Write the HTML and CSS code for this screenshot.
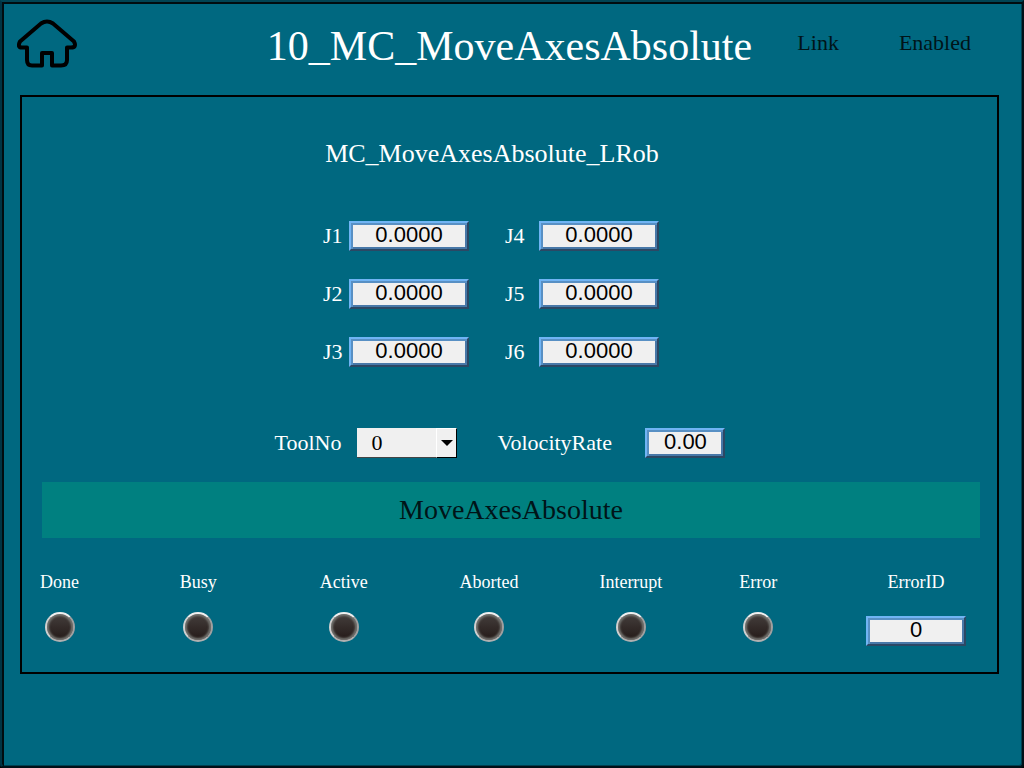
FILE: index.html
```html
<!DOCTYPE html>
<html lang="en">
<head>
<meta charset="utf-8">
<meta name="viewport" content="width=device-width, initial-scale=1">
<title>10_MC_MoveAxesAbsolute</title>
<link rel="stylesheet" href="styles.css">
</head>
<body>
<div class="screen">
  <header class="header">
    <button class="home" type="button" aria-label="Home">
      <svg viewBox="0 0 60 50" width="60" height="50" fill="none" stroke="#000" stroke-width="4" stroke-linejoin="round">
        <path d="M24 4.500Q30 .500 36 4.500L57 22.500Q60 28.500 54 28.500H50V41Q50 46.500 44 46.500H35V34H25V46.500H15Q10 46.500 10 41V28.500H5Q0 28.500 3 22.500Z"/>
      </svg>
    </button>
    <h1 class="title">10_MC_MoveAxesAbsolute</h1>
    <div class="states"><span>Link</span><span>Enabled</span></div>
  </header>
  <main class="panel">
    <h2 class="subtitle">MC_MoveAxesAbsolute_LRob</h2>
    <div class="axes">
      <label for="j1">J1</label><input class="field" id="j1" type="text" value="0.0000">
      <label class="second" for="j4">J4</label><input class="field" id="j4" type="text" value="0.0000">
      <label for="j2">J2</label><input class="field" id="j2" type="text" value="0.0000">
      <label class="second" for="j5">J5</label><input class="field" id="j5" type="text" value="0.0000">
      <label for="j3">J3</label><input class="field" id="j3" type="text" value="0.0000">
      <label class="second" for="j6">J6</label><input class="field" id="j6" type="text" value="0.0000">
    </div>
    <div class="options">
      <div class="option">
        <label for="tool">ToolNo</label>
        <div class="picker">
          <select id="tool"><option>0</option></select>
          <span class="arrow"><svg viewBox="0 0 12 6" width="12" height="6"><path d="M0 0H12L6 6Z"/></svg></span>
        </div>
      </div>
      <div class="option">
        <label class="rate-label" for="rate">VolocityRate</label>
        <input class="field rate" id="rate" type="text" value="0.00">
      </div>
    </div>
    <button class="move" type="button">MoveAxesAbsolute</button>
    <div class="statuses">
      <div class="status"><span>Done</span><i class="led"></i></div>
      <div class="status"><span>Busy</span><i class="led"></i></div>
      <div class="status"><span>Active</span><i class="led"></i></div>
      <div class="status"><span>Aborted</span><i class="led"></i></div>
      <div class="status"><span>Interrupt</span><i class="led"></i></div>
      <div class="status"><span>Error</span><i class="led"></i></div>
      <div class="status code"><label for="eid">ErrorID</label><input class="field" id="eid" type="text" value="0"></div>
    </div>
  </main>
</div>
</body>
</html>
```
FILE: styles.css
```css
* { box-sizing: border-box; }
body {
  margin: 0;
  background: #000;
  color: #fff;
  font: 22px/24px "Liberation Serif", serif;
}
h1, h2 { margin: 0; font-weight: normal; }
button { padding: 0; border: 0; background: none; font: inherit; cursor: pointer; }
.screen {
  min-height: 100vh;
  padding: 2px 23px 20px 18px;
  border: 2px solid;
  border-color: #004454 #001018 #001018 #003444;
  border-radius: 0 0 4px 4px;
  background: #006880;
  box-shadow: inset 2px 2px #000c10, inset -1px -1px #004050;
}
.header {
  display: grid;
  grid-template-columns: 1fr auto 1fr;
  height: 91px;
}
.home { display: flex; justify-self: start; align-self: start; margin: 15px 0 0 -3px; }
.title { font-size: 42px; line-height: 84px; }
.states {
  display: flex;
  justify-content: flex-end;
  gap: 60px;
  padding: 27px 28px 0 0;
  color: #001418;
}
.panel {
  display: flex;
  flex-direction: column;
  padding: 41px 17px 26px 18px;
  border: 2px solid #000;
}
.subtitle { padding-right: 36px; text-align: center; font-size: 26px; line-height: 32px; }
.axes {
  display: grid;
  grid-template-columns: 26px 120px 70px 120px;
  row-gap: 28px;
  justify-content: center;
  align-items: center;
  margin-top: 51px;
  padding-right: 38px;
}
.axes .second { padding-left: 36px; }
.field {
  display: block;
  width: 100%;
  height: 30px;
  padding: 2px 2px 4px;
  border: 2px solid;
  border-color: #70b4f4 #2c4864 #2c4864 #70b4f4;
  border-radius: 0;
  background: #f0f0f0;
  box-shadow: inset 2px 2px #5890c4, inset -2px -2px #4878a8;
  color: #000;
  font: 22px/20px "Liberation Sans", Arial, sans-serif;
  text-align: center;
}
.options {
  display: flex;
  justify-content: center;
  gap: 40px;
  margin-top: 61px;
  padding-right: 20px;
}
.option { display: flex; align-items: center; gap: 16px; }
.option .rate { width: 80px; }
.rate-label { width: 132px; }
.picker { position: relative; width: 100px; height: 30px; }
.picker select {
  width: 100%;
  height: 100%;
  padding: 0 14px;
  border: 0;
  border-bottom: 1px solid #444;
  border-radius: 0;
  appearance: none;
  background: #f0f0f0;
  color: #000;
  font: inherit;
}
.arrow {
  position: absolute;
  inset: 0 0 0 auto;
  display: flex;
  align-items: center;
  justify-content: center;
  width: 21px;
  border: 1px solid;
  border-color: #fff #000 #000 #fff;
  background: #f0f0f0;
  pointer-events: none;
}
.move {
  height: 56px;
  margin: 24px 0 0 2px;
  background: #008080;
  color: #001418;
  font-size: 28px;
}
.statuses {
  display: grid;
  grid-template-columns: repeat(6, minmax(0, 140fr)) minmax(0, 87fr);
  margin-top: 32px;
  padding-right: 14px;
  font-size: 18px;
}
.status {
  display: flex;
  flex-direction: column;
  align-items: center;
  justify-self: start;
  gap: 18px;
}
.code { justify-self: end; width: 100px; gap: 22px; }
.led {
  width: 30px;
  height: 30px;
  border: 2px solid;
  border-color: #f0f0f0 #a0a0a0 #b0b0b0 #d0d0d0;
  border-radius: 50%;
  background: linear-gradient(#443e3c, #241a18);
  box-shadow: inset 0 0 2px 2px #70706c;
}
```
